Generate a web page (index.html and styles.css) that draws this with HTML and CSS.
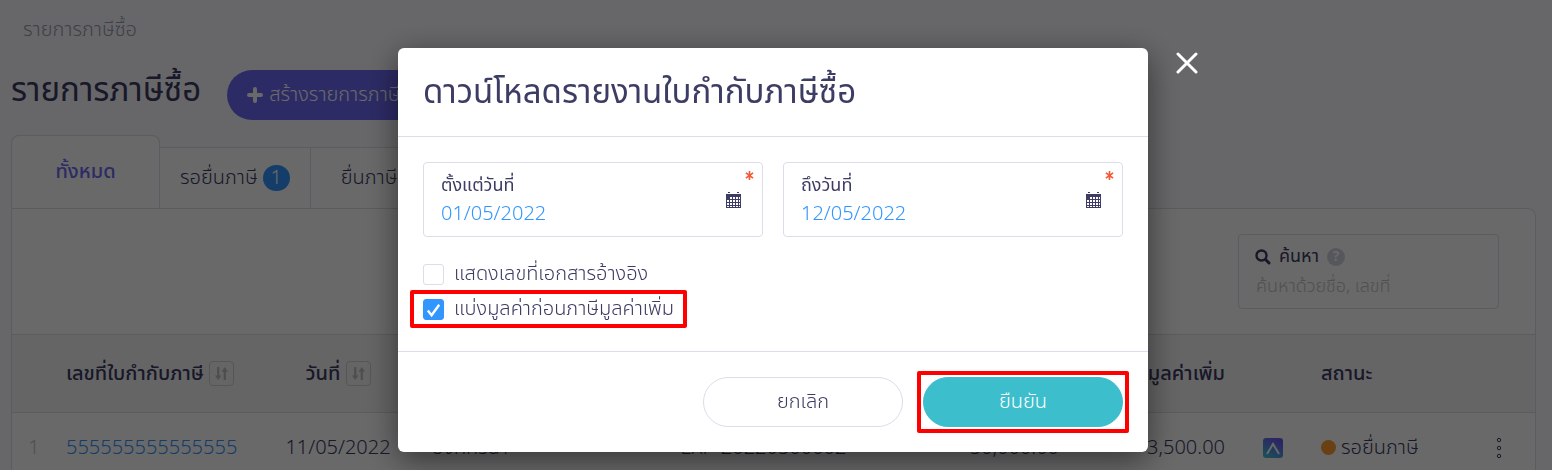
FILE: index.html
```html
<!DOCTYPE html>
<html lang="th">
<head>
    <meta charset="UTF-8">
    <meta name="viewport" content="width=device-width, initial-scale=1.0">
    <title>รายการภาษีซื้อ</title>
    <link rel="stylesheet" href="styles.css">
</head>
<body>

    <main class="page">
        <nav class="breadcrumb"><a href="#">รายการภาษีซื้อ</a></nav>

        <header class="page-header">
            <h1>รายการภาษีซื้อ</h1>
            <button type="button" class="create-button">
                <svg class="plus-icon" viewBox="0 0 16 16"><path d="M8 2v12M2 8h12" stroke="currentColor" stroke-width="4" stroke-linecap="round"/></svg>
                สร้างรายการภาษีซื้อ
            </button>
        </header>

        <div class="tabs">
            <button type="button" class="tab active">ทั้งหมด</button>
            <button type="button" class="tab">รอยื่นภาษี <span class="count">1</span></button>
            <button type="button" class="tab">ยื่นภาษีแล้ว</button>
        </div>

        <section class="card">
            <div class="toolbar">
                <div class="search-box">
                    <label for="search">
                        <svg class="search-icon" viewBox="0 0 16 16"><circle cx="6.5" cy="6.5" r="5" fill="none" stroke="currentColor" stroke-width="2.4"/><path d="M10.5 10.5L14 14" stroke="currentColor" stroke-width="3" stroke-linecap="round"/></svg>
                        ค้นหา
                        <span class="help">?</span>
                    </label>
                    <input type="text" id="search" placeholder="ค้นหาด้วยชื่อ, เลขที่">
                </div>
            </div>

            <table>
                <colgroup>
                    <col class="col-index">
                    <col class="col-number">
                    <col class="col-date">
                    <col class="col-seller">
                    <col class="col-ref">
                    <col class="col-amount">
                    <col class="col-vat">
                    <col class="col-app">
                    <col class="col-status">
                    <col class="col-menu">
                </colgroup>
                <thead>
                    <tr>
                        <th></th>
                        <th>เลขที่ใบกำกับภาษี
                            <button type="button" class="sort" aria-label="เรียงตามเลขที่"><svg viewBox="0 0 16 16"><path d="M4.5 1v10M11.5 15V5" stroke="currentColor" stroke-width="2.4"/><path d="M1 10h7L4.5 15zM8 6h7L11.5 1z" fill="currentColor"/></svg></button>
                        </th>
                        <th class="center">วันที่
                            <button type="button" class="sort" aria-label="เรียงตามวันที่"><svg viewBox="0 0 16 16"><path d="M4.5 1v10M11.5 15V5" stroke="currentColor" stroke-width="2.4"/><path d="M1 10h7L4.5 15zM8 6h7L11.5 1z" fill="currentColor"/></svg></button>
                        </th>
                        <th>ผู้ขาย</th>
                        <th class="center">เลขที่เอกสาร</th>
                        <th class="right">มูลค่า</th>
                        <th class="right">มูลค่าเพิ่ม</th>
                        <th></th>
                        <th>สถานะ</th>
                        <th></th>
                    </tr>
                </thead>
                <tbody>
                    <tr>
                        <td class="index">1</td>
                        <td><a href="#">555555555555555</a></td>
                        <td class="center">11/05/2022</td>
                        <td>องค์กรนำ</td>
                        <td class="center">EXP-20220500002</td>
                        <td class="right">50,000.00</td>
                        <td class="right">3,500.00</td>
                        <td class="center">
                            <svg class="app-icon" viewBox="0 0 20 20">
                                <defs>
                                    <linearGradient id="app" x1="0" y1="1" x2="0.5" y2="0">
                                        <stop offset="0" stop-color="#3ec8d4"/>
                                        <stop offset="1" stop-color="#6a5cf0"/>
                                    </linearGradient>
                                </defs>
                                <rect width="20" height="20" rx="3" fill="url(#app)"/>
                                <path d="M4 16L10 6L16 16" fill="none" stroke="#fff" stroke-width="2"/>
                            </svg>
                        </td>
                        <td><span class="status"><span class="status-dot"></span>รอยื่นภาษี</span></td>
                        <td class="center">
                            <button type="button" class="menu-button" aria-label="เมนู"><svg viewBox="0 0 6 22" fill="none" stroke="currentColor"><circle cx="3" cy="3" r="1.7"/><circle cx="3" cy="11" r="1.7"/><circle cx="3" cy="19" r="1.7"/></svg></button>
                        </td>
                    </tr>
                </tbody>
            </table>
        </section>
    </main>

    <!-- Download report dialog -->
    <div class="overlay">
        <form class="modal" role="dialog" aria-labelledby="modal-title">
            <button type="button" class="close" aria-label="ปิด"><svg viewBox="0 0 22 22"><path d="M2 2L20 20M20 2L2 20" stroke="currentColor" stroke-width="3" stroke-linecap="round"/></svg></button>

            <div class="modal-header">
                <h2 id="modal-title">ดาวน์โหลดรายงานใบกำกับภาษีซื้อ</h2>
            </div>

            <div class="modal-body">
                <div class="dates">
                    <div class="date-field">
                        <div class="date-text">
                            <label for="from">ตั้งแต่วันที่</label>
                            <input type="text" id="from" value="01/05/2022" required>
                        </div>
                        <svg class="calendar" viewBox="0 0 15 16"><path d="M0 2h15v14H0zM2 0h2v1H2zM11 0h2v1h-2z" fill="currentColor"/><path d="M4 5h2v2H4zM7 5h2v2H7zM10 5h2v2h-2zM13 5h1v2h-1zM1 8h2v2H1zM4 8h2v2H4zM7 8h2v2H7zM10 8h2v2h-2zM13 8h1v2h-1zM1 11h2v2H1zM4 11h2v2H4zM7 11h2v2H7zM10 11h2v2h-2zM13 11h1v2h-1zM1 14h2v1H1zM4 14h2v1H4zM7 14h2v1H7zM10 14h2v1h-2zM13 14h1v1h-1z" fill="#fff"/></svg>
                        <svg class="required" viewBox="0 0 10 10"><path d="M5 0v10M1 2l8 6M9 2l-8 6" stroke="currentColor" stroke-width="1.8"/></svg>
                    </div>
                    <div class="date-field">
                        <div class="date-text">
                            <label for="to">ถึงวันที่</label>
                            <input type="text" id="to" value="12/05/2022" required>
                        </div>
                        <svg class="calendar" viewBox="0 0 15 16"><path d="M0 2h15v14H0zM2 0h2v1H2zM11 0h2v1h-2z" fill="currentColor"/><path d="M4 5h2v2H4zM7 5h2v2H7zM10 5h2v2h-2zM13 5h1v2h-1zM1 8h2v2H1zM4 8h2v2H4zM7 8h2v2H7zM10 8h2v2h-2zM13 8h1v2h-1zM1 11h2v2H1zM4 11h2v2H4zM7 11h2v2H7zM10 11h2v2h-2zM13 11h1v2h-1zM1 14h2v1H1zM4 14h2v1H4zM7 14h2v1H7zM10 14h2v1h-2zM13 14h1v1h-1z" fill="#fff"/></svg>
                        <svg class="required" viewBox="0 0 10 10"><path d="M5 0v10M1 2l8 6M9 2l-8 6" stroke="currentColor" stroke-width="1.8"/></svg>
                    </div>
                </div>

                <div class="options">
                    <label class="option"><input type="checkbox"> แสดงเลขที่เอกสารอ้างอิง</label>
                    <label class="option marked"><input type="checkbox" checked> แบ่งมูลค่าก่อนภาษีมูลค่าเพิ่ม</label>
                </div>
            </div>

            <div class="modal-footer">
                <button type="button" class="cancel">ยกเลิก</button>
                <button type="submit" class="confirm marked">ยืนยัน</button>
            </div>
        </form>
    </div>

</body>
</html>
```
FILE: styles.css
```css
/* General styling */
* {
    box-sizing: border-box;
}

body {
    margin: 0;
    height: 100vh;
    overflow: hidden;
    font-family: "Noto Sans Thai", "Noto Sans", sans-serif;
    font-size: 20px;
    font-weight: 300;
    line-height: 26px;
    color: #3c3c64;
    background-color: #fafaff;
}

h1, h2 {
    margin: 0;
    font-size: 33px;
    font-weight: 400;
}

h1 {
    line-height: 42px;
}

a {
    color: #3296ff;
    text-decoration: none;
}

button, input {
    font: inherit;
    color: inherit;
}

button {
    cursor: pointer;
}

/* Page behind the dialog */
.page {
    padding: 17px 16px 0 11px;
}

.breadcrumb {
    padding-left: 12px;
}

.breadcrumb a {
    color: #9b9bb0;
}

.page-header {
    display: flex;
    align-items: flex-start;
    gap: 26px;
    margin-top: 27px;
}

.create-button {
    display: flex;
    align-items: center;
    gap: 6px;
    height: 50px;
    padding: 0 20px;
    border: none;
    border-radius: 25px;
    color: #fff;
    background-color: #6e69f5;
}

.plus-icon {
    width: 16px;
    height: 16px;
}

/* Tabs */
.tabs {
    display: flex;
    align-items: flex-end;
    margin-top: 15px;
}

.tab {
    height: 61px;
    padding: 0 20px;
    border: 1px solid #dcdceb;
    border-left: none;
    border-bottom: none;
    background-color: #fff;
}

.tab:last-child {
    padding: 0 30px;
}

.tab.active {
    width: 149px;
    height: 73px;
    border-left: 1px solid #dcdceb;
    border-radius: 8px 8px 0 0;
    font-weight: 500;
    color: #6e69f5;
}

.count {
    display: inline-block;
    width: 27px;
    border-radius: 13px;
    color: #fff;
    background-color: #3296ff;
}

/* Card with the list */
.card {
    border: 1px solid #dcdceb;
    border-radius: 0 8px 0 0;
    background-color: #fff;
}

.toolbar {
    display: flex;
    justify-content: flex-end;
    padding: 25px 36px;
}

.search-box {
    width: 261px;
    height: 75px;
    padding: 9px 16px;
    border: 1px solid #dcdceb;
    border-radius: 4px;
}

.search-box label {
    display: flex;
    align-items: center;
    gap: 8px;
    font-size: 18px;
    font-weight: 400;
}

.search-box input {
    width: 100%;
    padding: 4px 1px 0;
    border: none;
    font-size: 18px;
    background: none;
}

.search-box input::placeholder {
    color: #c3c3c8;
}

.search-icon {
    width: 16px;
    height: 16px;
}

.help {
    width: 18px;
    height: 18px;
    border-radius: 50%;
    font-size: 14px;
    font-weight: 700;
    line-height: 18px;
    text-align: center;
    color: #fff;
    background-color: #d2d2e1;
}

table {
    width: 100%;
    table-layout: fixed;
    border-collapse: collapse;
}

th, td {
    padding: 0 10px;
    text-align: left;
    white-space: nowrap;
}

th {
    height: 78px;
    border-top: 1px solid #dcdceb;
    border-bottom: 1px solid #dcdceb;
    font-weight: 500;
    background-color: #f5f5f7;
}

td {
    height: 70px;
}

.center {
    text-align: center;
}

.right {
    text-align: right;
}

.index {
    text-align: center;
    color: #c3c3c8;
}

.col-index { width: 44px; }
.col-number { width: 198px; }
.col-date { width: 168px; }
.col-ref { width: 233px; }
.col-amount { width: 189px; }
.col-vat { width: 166px; }
.col-app { width: 76px; }
.col-status { width: 152px; }
.col-menu { width: 72px; }

.sort {
    width: 25px;
    height: 25px;
    padding: 4px;
    border: 1px solid #d2d2d2;
    border-radius: 4px;
    color: #bebebe;
    background: none;
    vertical-align: middle;
}

.sort svg {
    display: block;
}

.app-icon {
    width: 20px;
    height: 20px;
    vertical-align: middle;
}

.status {
    display: flex;
    align-items: center;
    gap: 5px;
}

.status-dot {
    width: 15px;
    height: 15px;
    border-radius: 50%;
    background-color: #ff9b32;
}

.menu-button {
    width: 20px;
    padding: 0;
    border: none;
    background: none;
    vertical-align: middle;
}

.menu-button svg {
    display: block;
    height: 22px;
    margin: 0 auto;
}

/* Dialog */
.overlay {
    position: fixed;
    inset: 0;
    display: flex;
    justify-content: center;
    align-items: flex-start;
    padding: 48px 6px 0 0;
    background-color: rgba(0, 0, 0, 0.59);
}

.modal {
    position: relative;
    width: 750px;
    border-radius: 6px;
    background-color: #fff;
    box-shadow: 0 8px 32px rgba(0, 0, 0, 0.5);
}

.close {
    position: absolute;
    top: 4px;
    right: -50px;
    width: 22px;
    height: 22px;
    padding: 0;
    border: none;
    color: #fff;
    background: none;
}

.close svg {
    display: block;
}

.modal-header {
    padding: 20px 25px 18px;
    border-bottom: 1px solid #dcdceb;
}

.modal-header h2 {
    line-height: 50px;
}

.modal-body {
    padding: 25px 25px 29px;
}

.dates {
    display: grid;
    grid-template-columns: 1fr 1fr;
    gap: 20px;
}

.date-field {
    position: relative;
    display: flex;
    align-items: center;
    height: 75px;
    padding: 0 21px 0 17px;
    border: 1px solid #dcdceb;
    border-radius: 4px;
}

.date-text {
    flex: 1;
    line-height: 28px;
}

.date-text label {
    display: block;
    font-size: 18px;
    font-weight: 400;
}

.date-text input {
    display: block;
    width: 100%;
    padding: 0;
    border: none;
    color: #3296ff;
    background: none;
}

.calendar {
    width: 15px;
    height: 16px;
}

.required {
    position: absolute;
    top: 8px;
    right: 8px;
    width: 9px;
    height: 9px;
    color: #f55a37;
}

.options {
    display: flex;
    flex-direction: column;
    align-items: flex-start;
    gap: 9px;
    margin-top: 24px;
}

.option {
    display: flex;
    align-items: center;
    gap: 10px;
}

.option input {
    appearance: none;
    width: 21px;
    height: 21px;
    margin: 0;
    border: 1px solid #dcdceb;
    border-radius: 3px;
}

.option input:checked {
    border-color: #3296ff;
    background: #3296ff url("data:image/svg+xml,%3Csvg xmlns='http://www.w3.org/2000/svg' viewBox='0 0 20 20'%3E%3Cpath d='M4 11L8 16L16 5' fill='none' stroke='white' stroke-width='2.5'/%3E%3C/svg%3E");
}

.modal-footer {
    display: flex;
    justify-content: flex-end;
    gap: 20px;
    padding: 25px;
    border-top: 1px solid #dcdceb;
}

.cancel, .confirm {
    width: 200px;
    height: 50px;
    border: 1px solid #dcdceb;
    border-radius: 25px;
    background-color: #fff;
}

.confirm {
    border-color: #3cbecd;
    color: #fff;
    background-color: #3cbecd;
}

/* Red frame round a marked control */
.marked {
    position: relative;
}

.marked::after {
    content: "";
    position: absolute;
    inset: -7px;
    border: 4px solid #f00;
    border-radius: 2px;
    pointer-events: none;
}

.option.marked::after {
    inset: -6px -13px;
}
```
